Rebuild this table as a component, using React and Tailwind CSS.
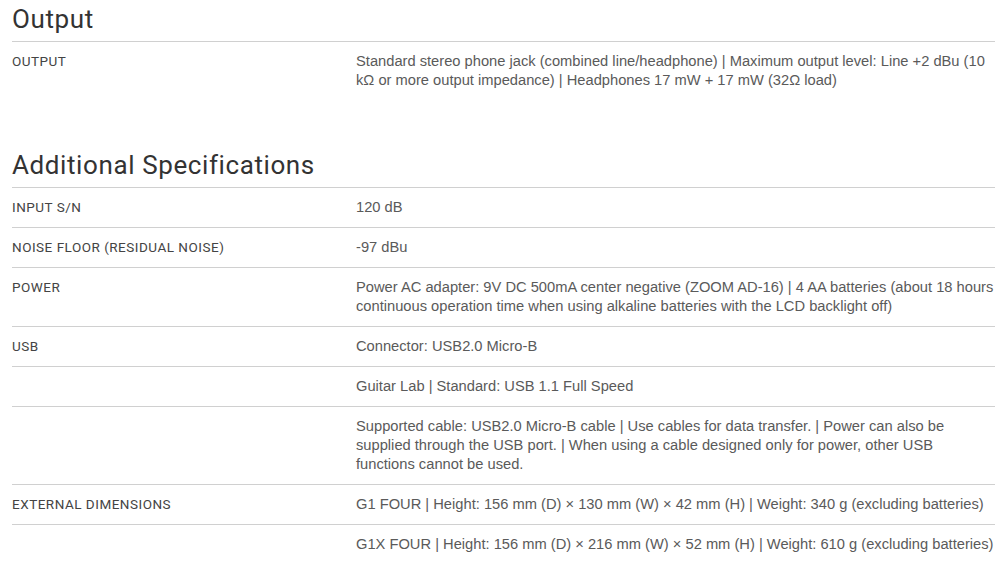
export default function App() {
  // Datos de las tablas de especificaciones
  const output = [
    {
      label: "OUTPUT",
      value:
        "Standard stereo phone jack (combined line/headphone) | Maximum output level: Line +2 dBu (10 kΩ or more output impedance) | Headphones 17 mW + 17 mW (32Ω load)",
    },
  ];

  const adicionales = [
    { label: "INPUT S/N", value: "120 dB" },
    { label: "NOISE FLOOR (RESIDUAL NOISE)", value: "-97 dBu" },
    {
      label: "POWER",
      value:
        "Power AC adapter: 9V DC 500mA center negative (ZOOM AD-16) | 4 AA batteries (about 18 hours continuous operation time when using alkaline batteries with the LCD backlight off)",
    },
    { label: "USB", value: "Connector: USB2.0 Micro-B" },
    { label: "", value: "Guitar Lab | Standard: USB 1.1 Full Speed" },
    {
      label: "",
      value:
        "Supported cable: USB2.0 Micro-B cable | Use cables for data transfer. | Power can also be supplied through the USB port. | When using a cable designed only for power, other USB functions cannot be used.",
    },
    {
      label: "EXTERNAL DIMENSIONS",
      value:
        "G1 FOUR | Height: 156 mm (D) × 130 mm (W) × 42 mm (H) | Weight: 340 g (excluding batteries)",
    },
    {
      label: "",
      value:
        "G1X FOUR | Height: 156 mm (D) × 216 mm (W) × 52 mm (H) | Weight: 610 g (excluding batteries)",
    },
  ];

  const Tabla = ({ filas }) => (
    <div className="border-t border-[#d0d0d0]">
      {filas.map((fila, i) => (
        <div
          key={i}
          className={
            "grid grid-cols-[344px_1fr] py-[10px] " +
            (i < filas.length - 1 ? "border-b border-[#d0d0d0]" : "")
          }
        >
          <div className="font-['Roboto',sans-serif] text-[13.5px] leading-[19px] tracking-[0.5px] text-[#444]">
            {fila.label}
          </div>
          <div className="font-['Liberation_Sans',Arial,sans-serif] text-[14.7px] leading-[19px] text-[#5a5a5a]">
            {fila.value}
          </div>
        </div>
      ))}
    </div>
  );

  return (
    <div className="min-h-screen bg-white pl-[12px] pr-[5px]">
      {/* Output */}
      <h2 className="pt-[4px] pb-[6px] font-['Roboto',sans-serif] text-[26px] leading-[31px] tracking-[0.6px] text-[#333]">
        Output
      </h2>
      <Tabla filas={output} />

      {/* Additional Specifications */}
      <h2 className="mt-[50px] pb-[6px] font-['Roboto',sans-serif] text-[26px] leading-[31px] tracking-[0.6px] text-[#333]">
        Additional Specifications
      </h2>
      <Tabla filas={adicionales} />
    </div>
  );
}
